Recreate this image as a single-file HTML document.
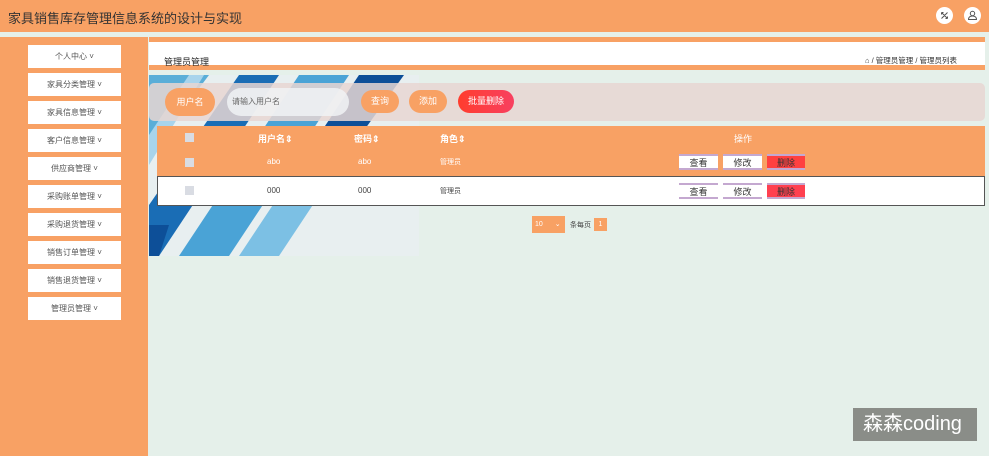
<!DOCTYPE html>
<html><head><meta charset="utf-8"><style>
*{margin:0;padding:0;box-sizing:border-box}
body{width:989px;height:456px;overflow:hidden;background:#e5f0ea;font-family:"Liberation Sans","Noto Sans CJK SC",sans-serif;position:relative}
.abs{position:absolute}
.hdr{left:0;top:0;width:989px;height:32px;background:#f8a164}
.hdr .t{left:8px;top:8px;font-size:13px;color:#333}
.ic{width:17px;height:17px;border-radius:50%;background:#fff;top:7px}
.side{left:0;top:37px;width:148px;height:419px;background:#f8a164}
.mi{left:28px;width:93px;height:23px;background:#fff;font-size:8px;color:#555;text-align:center;line-height:23px}
.btn{border-radius:14px;color:#fff;font-size:9px;text-align:center}
.cb{width:9px;height:9px;background:#d9dce3}
.ob{height:16px;font-size:9px;text-align:center;line-height:14px;border-top:2px solid #c4a8d0;border-bottom:2px solid #c4a8d0;color:#333}
</style></head><body>
<div class="abs hdr"><div class="abs t">家具销售库存管理信息系统的设计与实现</div>
<div class="abs ic" style="left:936px"><svg width="17" height="17"><path d="M5.5 5.5L11.5 11.5M11.5 5.5L5.5 11.5M5.5 5.5h2M5.5 5.5v2M11.5 11.5h-2M11.5 11.5v-2" stroke="#555" stroke-width="1"/></svg></div>
<div class="abs ic" style="left:964px"><svg width="17" height="17"><circle cx="8.5" cy="6.5" r="2.2" fill="none" stroke="#555"/><path d="M4.5 12.5h8c0-2.5-2-3.5-4-3.5s-4 1-4 3.5z" fill="none" stroke="#555"/></svg></div>
</div>
<div class="abs side"></div>
<div class="abs mi" style="top:45px">个人中心 ˅</div>
<div class="abs mi" style="top:73px">家具分类管理 ˅</div>
<div class="abs mi" style="top:101px">家具信息管理 ˅</div>
<div class="abs mi" style="top:129px">客户信息管理 ˅</div>
<div class="abs mi" style="top:157px">供应商管理 ˅</div>
<div class="abs mi" style="top:185px">采购账单管理 ˅</div>
<div class="abs mi" style="top:213px">采购退货管理 ˅</div>
<div class="abs mi" style="top:241px">销售订单管理 ˅</div>
<div class="abs mi" style="top:269px">销售退货管理 ˅</div>
<div class="abs mi" style="top:297px">管理员管理 ˅</div>

<div class="abs" style="left:149px;top:37px;width:836px;height:33px;background:#f8a164"></div>
<div class="abs" style="left:149px;top:42px;width:836px;height:23px;background:#fff"></div>
<div class="abs" style="left:164px;top:55px;font-size:9px;color:#222">管理员管理</div>
<div class="abs" style="left:865px;top:55px;font-size:7.5px;color:#333">⌂ / 管理员管理 / 管理员列表</div>

<svg class="abs" style="left:149px;top:75px" width="270" height="181">
<rect width="270" height="181" fill="#e8eff0"/>
<polygon points="0,0 60,0 0,80" fill="#5aaed8"/>
<polygon points="30,181 150,0 200,0 80,181" fill="#4aa3d6"/>
<polygon points="0,181 0,130 90,0 130,0 10,181" fill="#1a6db5"/>
<polygon points="90,181 210,0 250,0 130,181" fill="#7cc0e4"/>
<polygon points="150,90 210,0 255,0 190,90" fill="#0d4f98"/>
<polygon points="0,60 40,0 55,0 0,90" fill="#a8d4ec"/>
<polygon points="0,181 0,150 20,150 10,181" fill="#0d4f98"/>
</svg>

<div class="abs" style="left:149px;top:83px;width:836px;height:38px;background:rgba(232,214,210,.85);border-radius:5px"></div>
<div class="abs btn" style="left:165px;top:88px;width:50px;height:28px;line-height:28px;background:#f8a164">用户名</div>
<div class="abs" style="left:227px;top:88px;width:122px;height:28px;border-radius:14px;background:rgba(240,242,245,.85);font-size:8px;color:#666;line-height:28px;padding-left:5px">请输入用户名</div>
<div class="abs btn" style="left:361px;top:90px;width:38px;height:23px;line-height:23px;background:#f8a164">查询</div>
<div class="abs btn" style="left:409px;top:90px;width:38px;height:23px;line-height:23px;background:#f8a164">添加</div>
<div class="abs btn" style="left:458px;top:90px;width:56px;height:23px;line-height:23px;background:linear-gradient(90deg,#ff3d2e,#f84060)">批量删除</div>

<div class="abs" style="left:157px;top:126px;width:828px;height:50px;background:#f8a164"></div>
<div class="abs" style="left:157px;top:176px;width:828px;height:30px;background:#fff;border:1px solid #555"></div>
<div class="abs cb" style="left:185px;top:133px"></div>
<div class="abs cb" style="left:185px;top:158px"></div>
<div class="abs cb" style="left:185px;top:186px"></div>
<div class="abs" style="left:258px;top:132px;font-size:9px;color:#fff;font-weight:bold">用户名⇕</div>
<div class="abs" style="left:354px;top:132px;font-size:9px;color:#fff;font-weight:bold">密码⇕</div>
<div class="abs" style="left:440px;top:132px;font-size:9px;color:#fff;font-weight:bold">角色⇕</div>
<div class="abs" style="left:734px;top:132px;font-size:9px;color:#fff">操作</div>
<div class="abs" style="left:267px;top:157px;font-size:8px;color:#fff">abo</div>
<div class="abs" style="left:358px;top:157px;font-size:8px;color:#fff">abo</div>
<div class="abs" style="left:440px;top:157px;font-size:7px;color:#fff">管理员</div>
<div class="abs" style="left:267px;top:186px;font-size:8px;color:#444">000</div>
<div class="abs" style="left:358px;top:186px;font-size:8px;color:#444">000</div>
<div class="abs" style="left:440px;top:186px;font-size:7px;color:#444">管理员</div>
<div class="abs ob" style="left:679px;top:154px;width:39px;background:#fff">查看</div>
<div class="abs ob" style="left:723px;top:154px;width:39px;background:#fff">修改</div>
<div class="abs ob" style="left:767px;top:154px;width:38px;background:#ff4040">删除</div>
<div class="abs ob" style="left:679px;top:183px;width:39px;background:#fff">查看</div>
<div class="abs ob" style="left:723px;top:183px;width:39px;background:#fff">修改</div>
<div class="abs ob" style="left:767px;top:183px;width:38px;background:#ff4050">删除</div>

<div class="abs" style="left:532px;top:216px;width:33px;height:17px;background:#f8a164;font-size:7px;color:#fff;line-height:17px;padding-left:3px">10 <span style="margin-left:10px">⌄</span></div>
<div class="abs" style="left:570px;top:220px;font-size:7px;color:#444">条每页</div>
<div class="abs" style="left:594px;top:218px;width:13px;height:13px;background:#f8a164;font-size:7px;color:#fff;text-align:center;line-height:13px">1</div>

<div class="abs" style="left:853px;top:408px;width:124px;height:33px;background:rgba(128,130,125,.9);color:#fff;font-size:20px;line-height:33px;padding-left:10px">森森coding</div>
</body></html>
